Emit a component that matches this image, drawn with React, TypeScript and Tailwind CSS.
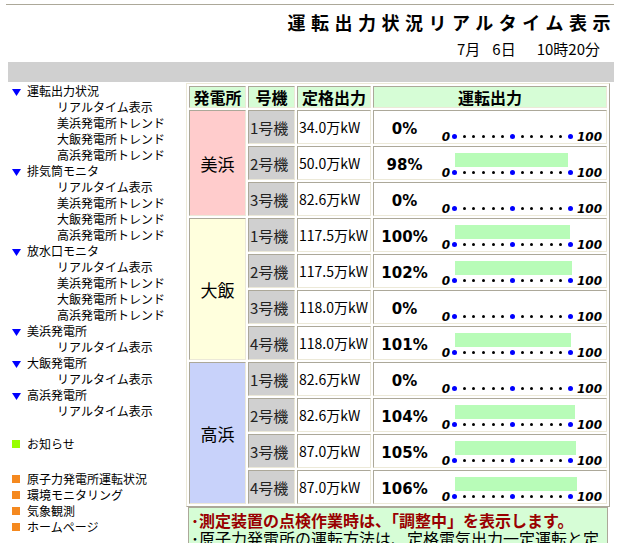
import React from 'react';

type Unit = { name: string; cap: string; pct: number };
type Plant = { name: string; bg: string; span: string; units: Unit[] };

const plants: Plant[] = [
  {
    name: '美浜',
    bg: 'bg-[#ffcccc]',
    span: 'row-span-3',
    units: [
      { name: '1号機', cap: '34.0万kW', pct: 0 },
      { name: '2号機', cap: '50.0万kW', pct: 98 },
      { name: '3号機', cap: '82.6万kW', pct: 0 },
    ],
  },
  {
    name: '大飯',
    bg: 'bg-[#ffffdd]',
    span: 'row-span-4',
    units: [
      { name: '1号機', cap: '117.5万kW', pct: 100 },
      { name: '2号機', cap: '117.5万kW', pct: 102 },
      { name: '3号機', cap: '118.0万kW', pct: 0 },
      { name: '4号機', cap: '118.0万kW', pct: 101 },
    ],
  },
  {
    name: '高浜',
    bg: 'bg-[#c8d2fa]',
    span: 'row-span-4',
    units: [
      { name: '1号機', cap: '82.6万kW', pct: 0 },
      { name: '2号機', cap: '82.6万kW', pct: 104 },
      { name: '3号機', cap: '87.0万kW', pct: 105 },
      { name: '4号機', cap: '87.0万kW', pct: 106 },
    ],
  },
];

const cell =
  'border border-t-[#aca899] border-l-[#aca899] border-b-[#ece9d8] border-r-[#ece9d8]';

function Tri() {
  return (
    <svg width="9" height="7" viewBox="0 0 9 7" className="shrink-0 mt-[3px]">
      <polygon points="0,0 9,0 4.5,7" fill="#0000ff" />
    </svg>
  );
}

function Head({ label }: { label: string }) {
  return (
    <div className="flex items-center h-[16px] pl-[12px]">
      <Tri />
      <span className="ml-[6px]">{label}</span>
    </div>
  );
}

function Sub({ label }: { label: string }) {
  return <div className="h-[16px] pl-[57px]">{label}</div>;
}

function Sq({ color, label }: { color: string; label: string }) {
  return (
    <div className="flex items-center h-[16px] pl-[12px]">
      <span className={`w-[8px] h-[8px] shrink-0 ${color}`} />
      <span className="ml-[7px]">{label}</span>
    </div>
  );
}

function Gauge({ pct }: { pct: number }) {
  const dots = Array.from({ length: 13 }, (_, i) => i);
  return (
    <div className="flex h-full">
      <div className="w-[61px] flex items-center justify-center pt-[4px] font-['DejaVu_Sans',sans-serif] font-bold text-[15px] leading-none">
        {pct}%
      </div>
      <div className="flex flex-col pt-[6px]">
        <div className="h-[14px] ml-[20px]">
          <div className="h-full bg-[#b8fcb8]" style={{ width: pct * 1.15 }} />
        </div>
        <div className="flex items-center h-[11px] font-['DejaVu_Sans',sans-serif] font-bold italic text-[12px] leading-none">
          <span className="w-[15px] text-right">0</span>
          <div className="ml-[2px] w-[121px] flex justify-between items-center">
            {dots.map((i) => (
              <span key={i} className="w-[5px] flex justify-center items-center">
                <span
                  className={
                    i % 6 === 0
                      ? 'w-[5px] h-[5px] rounded-full bg-[#0000ff]'
                      : 'w-[3px] h-[3px] rounded-full bg-black'
                  }
                />
              </span>
            ))}
          </div>
          <span className="ml-[4px]">100</span>
        </div>
      </div>
    </div>
  );
}

export default function App() {
  return (
    <div className="w-[624px] h-[543px] overflow-hidden bg-white text-black font-['Noto_Sans_CJK_JP',sans-serif]">
      <div className="pt-[4px]">
        <div className="ml-[6px] mr-[10px] border-t border-[#aca899]" />
        <div className="mt-[5px] h-[24px] text-right pr-[8px] text-[18px] font-bold tracking-[5.5px] leading-[24px]">
          運転出力状況リアルタイム表示
        </div>
        <div className="mt-[5px] h-[20px] flex justify-end pr-[24px] text-[15px] leading-[20px]">
          <span>7月</span>
          <span className="ml-[12px]">6日</span>
          <span className="ml-[21px]">10時20分</span>
        </div>
        <div className="mt-[3px] ml-[8px] mr-[10px] h-[20px] bg-[#d0d0d0]" />
      </div>

      <div className="flex mt-[1px]">
        <div className="w-[186px] shrink-0 text-[12px] leading-[16px]">
          <Head label="運転出力状況" />
          <Sub label="リアルタイム表示" />
          <Sub label="美浜発電所トレンド" />
          <Sub label="大飯発電所トレンド" />
          <Sub label="高浜発電所トレンド" />
          <Head label="排気筒モニタ" />
          <Sub label="リアルタイム表示" />
          <Sub label="美浜発電所トレンド" />
          <Sub label="大飯発電所トレンド" />
          <Sub label="高浜発電所トレンド" />
          <Head label="放水口モニタ" />
          <Sub label="リアルタイム表示" />
          <Sub label="美浜発電所トレンド" />
          <Sub label="大飯発電所トレンド" />
          <Sub label="高浜発電所トレンド" />
          <Head label="美浜発電所" />
          <Sub label="リアルタイム表示" />
          <Head label="大飯発電所" />
          <Sub label="リアルタイム表示" />
          <Head label="高浜発電所" />
          <Sub label="リアルタイム表示" />
          <div className="h-[17px]" />
          <Sq color="bg-[#99ff00]" label="お知らせ" />
          <div className="h-[19px]" />
          <Sq color="bg-[#f5891f]" label="原子力発電所運転状況" />
          <Sq color="bg-[#f5891f]" label="環境モニタリング" />
          <Sq color="bg-[#f5891f]" label="気象観測" />
          <Sq color="bg-[#f5891f]" label="ホームページ" />
        </div>

        <div className="w-[424px] shrink-0">
          <div className="grid grid-cols-[57px_47px_74px_234px] grid-rows-[22px_repeat(11,34px)] gap-[2px] p-[2px] border border-t-[#ece9d8] border-l-[#ece9d8] border-b-[#aca899] border-r-[#aca899]">
            <div className={`${cell} bg-[#d6fdd6] flex items-center justify-center text-[16px] font-bold leading-none`}>発電所</div>
            <div className={`${cell} bg-[#d6fdd6] flex items-center justify-center text-[16px] font-bold leading-none`}>号機</div>
            <div className={`${cell} bg-[#d6fdd6] flex items-center justify-center text-[16px] font-bold leading-none`}>定格出力</div>
            <div className={`${cell} bg-[#d6fdd6] flex items-center justify-center text-[16px] font-bold leading-none`}>運転出力</div>
            {plants.map((p) => (
              <React.Fragment key={p.name}>
                <div className={`${cell} ${p.bg} ${p.span} flex items-center justify-center text-[17px] leading-none`}>
                  {p.name}
                </div>
                {p.units.map((u) => (
                  <React.Fragment key={u.name}>
                    <div className={`${cell} bg-[#d0d0d0] flex items-center pl-[1px] text-[15px] leading-none text-[#222]`}>
                      {u.name}
                    </div>
                    <div className={`${cell} bg-white flex items-center pl-[1px] text-[14px] leading-none whitespace-nowrap`}>
                      {u.cap}
                    </div>
                    <div className={`${cell} bg-white`}>
                      <Gauge pct={u.pct} />
                    </div>
                  </React.Fragment>
                ))}
              </React.Fragment>
            ))}
          </div>
          <div className="mx-[2px] border border-[#aca899] bg-[#d6fdd6] px-[2px] pt-[3px] text-[16px] leading-[18px]">
            <div className="text-[#990000] font-bold">･測定装置の点検作業時は、「調整中」を表示します。</div>
            <div>･原子力発電所の運転方法は、定格電気出力一定運転と定格熱出力一定運転があります。</div>
          </div>
        </div>
      </div>
    </div>
  );
}
